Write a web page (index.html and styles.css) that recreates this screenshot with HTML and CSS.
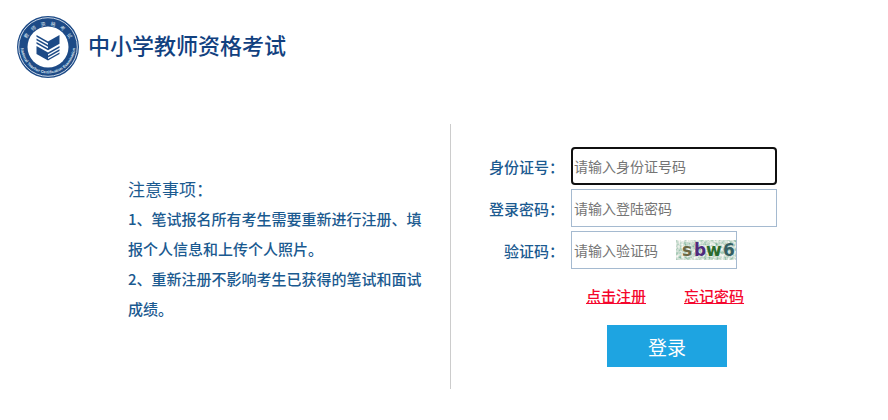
FILE: index.html
```
<!DOCTYPE html>
<html lang="zh-CN">
<head>
<meta charset="UTF-8">
<meta name="viewport" content="width=device-width, initial-scale=1.0">
<title>中小学教师资格考试</title>
<link rel="stylesheet" href="styles.css">
</head>
<body>
<header class="header">
    <svg class="logo" viewBox="0 0 62 62" aria-hidden="true">
        <defs>
            <path id="arcTop" d="M7.500 33 A23.500 23.500 0 1 1 54.500 33"/>
            <path id="arcBottom" d="M4 27 A27.200 27.200 0 1 0 58 27"/>
        </defs>
        <circle cx="31" cy="31" r="31" fill="#1d4a86"/>
        <circle cx="31" cy="31" r="29.300" fill="none" stroke="#dfe8f2" stroke-width="0.900"/>
        <circle cx="31" cy="31" r="20.500" fill="#fff"/>
        <text class="logo-cn"><textPath href="#arcTop" startOffset="50%" text-anchor="middle">教&nbsp;&nbsp;&nbsp;&nbsp;师&nbsp;&nbsp;&nbsp;&nbsp;资&nbsp;&nbsp;&nbsp;&nbsp;格&nbsp;&nbsp;&nbsp;&nbsp;考&nbsp;&nbsp;&nbsp;&nbsp;试</textPath></text>
        <text class="logo-en"><textPath href="#arcBottom" startOffset="50%" text-anchor="middle">National Teacher Certification Examination</textPath></text>
        <g fill="#1d4a86">
            <path d="M19.500 19 L31 25.500 V27.300 L19.500 20.800 Z"/>
            <path d="M19.500 22.500 L31 29 V30.800 L19.500 24.300 Z"/>
            <path d="M19.500 26 L31 32.500 V34.300 L19.500 27.800 Z"/>
            <path d="M31 25.500 L42.500 19 V27.800 L31 34.300 Z"/>
            <path d="M19.500 30 L31 36.500 V44.500 L19.500 38 Z"/>
            <path d="M42.500 30 L31 36.500 V38.300 L42.500 31.800 Z"/>
            <path d="M42.500 33.200 L31 39.700 V41.500 L42.500 35 Z"/>
            <path d="M42.500 36.400 L31 42.900 V44.500 L42.500 38 Z"/>
        </g>
    </svg>
    <h1 class="site-name">中小学教师资格考试</h1>
</header>

<main class="main">
    <section class="notice">
        <h2>注意事项：</h2>
        <p>1、笔试报名所有考生需要重新进行注册、填报个人信息和上传个人照片。</p>
        <p>2、重新注册不影响考生已获得的笔试和面试成绩。</p>
    </section>

    <form class="login" onsubmit="return false">
        <div class="row">
            <label for="idCard">身份证号：</label>
            <input class="field" type="text" id="idCard" placeholder="请输入身份证号码" autofocus>
        </div>
        <div class="row">
            <label for="password">登录密码：</label>
            <input class="field" type="password" id="password" placeholder="请输入登陆密码">
        </div>
        <div class="row">
            <label for="code">验证码：</label>
            <div class="field code-field">
                <input type="text" id="code" placeholder="请输入验证码">
                <svg class="captcha" viewBox="0 0 60 20" role="img" aria-label="验证码">
                    <filter id="noise" x="0" y="0" width="100%" height="100%">
                        <feTurbulence type="fractalNoise" baseFrequency="0.35" numOctaves="2" seed="6"/>
                        <feColorMatrix values="1.3 0 0 0 -0.02  0.8 0 0 0 0.34  1 0 0 0 0.16  0 0 0 0 1"/>
                    </filter>
                    <rect width="60" height="20" fill="#bcd8c8"/>
                    <rect width="60" height="20" filter="url(#noise)"/>
                    <text x="6" y="16" fill="#6b6845">s</text>
                    <text x="18" y="16" fill="#4f2a7c">b</text>
                    <text x="30" y="16" fill="#2a6b2d">w</text>
                    <text x="47" y="16" fill="#355f62">6</text>
                </svg>
            </div>
        </div>
        <div class="links">
            <a href="#">点击注册</a>
            <a href="#">忘记密码</a>
        </div>
        <button class="submit" type="submit">登录</button>
    </form>
</main>
</body>
</html>
```
FILE: styles.css
```
body {
    margin: 0;
    background-color: #fff;
    color: #1b5a90;
    font-family: "Noto Sans CJK SC", sans-serif;
}
.header {
    display: flex;
    align-items: center;
    gap: 9px;
    padding: 16px 17px 0;
}
.logo {
    width: 62px;
    height: 62px;
}
.logo-cn {
    fill: #dfe8f2;
    font-size: 5px;
}
.logo-en {
    fill: #dfe8f2;
    font-family: "Liberation Sans", Arial, sans-serif;
    font-size: 4px;
    font-weight: bold;
}
.site-name {
    margin: 0;
    padding-bottom: 6px;
    color: #12417f;
    font-size: 22px;
    font-weight: 500;
    line-height: 32px;
}
.main {
    display: grid;
    grid-template-columns: 1fr 1fr;
    margin-top: 46px;
    padding-left: 12px;
}
.notice {
    justify-self: end;
    box-sizing: border-box;
    max-width: 322px;
    padding: 50px 27px 0 0;
}
.notice h2 {
    margin: 0;
    font-size: 17px;
    font-weight: normal;
    line-height: 30px;
}
.notice p {
    margin: 0;
    font-size: 15px;
    font-weight: 500;
    line-height: 30px;
}
.login {
    border-left: 1px solid #ccc;
    padding: 23px 0 22px 38px;
}
.row {
    display: flex;
    align-items: center;
    gap: 7px;
    margin-bottom: 4px;
}
.row label {
    width: 75px;
    font-size: 15px;
    font-weight: 500;
    text-align: right;
    white-space: nowrap;
}
.field {
    box-sizing: border-box;
    width: 206px;
    height: 38px;
    padding: 0 2px;
    border: 1px solid #a5bad0;
    background-color: #fff;
}
input {
    color: #333;
    font-family: inherit;
    font-size: 14px;
}
input::placeholder {
    color: #757575;
}
.field:focus {
    padding: 0 1px;
    border: 2px solid #101010;
    border-radius: 4px;
    outline: none;
}
.code-field {
    display: flex;
    align-items: center;
    width: 166px;
    padding-right: 0;
}
.code-field input {
    flex: 1;
    min-width: 0;
    padding: 0;
    border: none;
    outline: none;
}
.captcha {
    width: 60px;
    height: 20px;
    font-family: "DejaVu Sans", sans-serif;
    font-size: 17px;
    font-weight: bold;
}
.links {
    display: flex;
    gap: 38px;
    margin-top: 12px;
    padding-left: 97px;
}
.links a {
    color: #f5062d;
    font-size: 15px;
    font-weight: 500;
    line-height: 30px;
}
.submit {
    width: 120px;
    height: 42px;
    margin: 14px 0 0 118px;
    padding: 0;
    border: none;
    background-color: #1ea4e1;
    color: #fff;
    font-family: inherit;
    font-size: 19px;
    cursor: pointer;
}
```
